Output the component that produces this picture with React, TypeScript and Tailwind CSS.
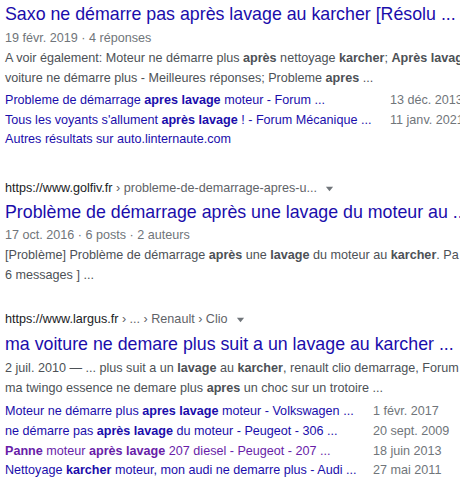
import React from "react";

type Part = string | { b: string };

const Rich = ({ parts }: { parts: Part[] }) => (
  <>
    {parts.map((p, i) =>
      typeof p === "string" ? (
        <span key={i}>{p}</span>
      ) : (
        <b key={i} className="font-bold">
          {p.b}
        </b>
      )
    )}
  </>
);

interface SubLink {
  parts: Part[];
  date: string;
  visited?: boolean;
}

const SubLinks = ({ links, col }: { links: SubLink[]; col: string }) => (
  <div className="flex flex-col">
    {links.map((l, i) => (
      <div key={i} className="flex leading-[19.7px] text-[12.6px]">
        <div className={`${col} shrink-0 overflow-hidden ${l.visited ? "text-[#681da8]" : "text-[#1a0dab]"}`}>
          <Rich parts={l.parts} />
        </div>
        <div className="text-[#70757a] shrink-0">{l.date}</div>
      </div>
    ))}
  </div>
);

const Arrow = () => (
  <svg width="9" height="9" viewBox="0 0 10 10" className="inline-block ml-[8px] mb-[1px]">
    <path d="M1 3 L9 3 L5 8 Z" fill="#70757a" />
  </svg>
);

export default function App() {
  return (
    <div
      className="w-[460px] h-[480px] overflow-hidden bg-white whitespace-nowrap pl-[5px]"
      style={{ fontFamily: '"Liberation Sans", Arial, sans-serif' }}
    >
      {/* result 1 */}
      <div className="pt-[1px]">
        <div className="text-[17.8px] leading-[26px] text-[#1a0dab]">
          Saxo ne démarre pas après lavage au karcher [Résolu ...
        </div>
        <div className="text-[12.6px] leading-[20px] text-[#70757a] mt-[1px]">19 févr. 2019 · 4 réponses</div>
        <div className="text-[12.6px] leading-[20px] text-[#4d5156]">
          <div>
            <Rich
              parts={[
                "A voir également: Moteur ne démarre plus ",
                { b: "après" },
                " nettoyage ",
                { b: "karcher" },
                "; ",
                { b: "Après lavage" },
                " ma",
              ]}
            />
          </div>
          <div>
            <Rich parts={["voiture ne démarre plus - Meilleures réponses; Probleme ", { b: "apres" }, " ..."]} />
          </div>
        </div>
        <div className="mt-[3px]">
          <SubLinks
            col="w-[385px]"
            links={[
              { parts: ["Probleme de démarrage ", { b: "apres lavage" }, " moteur - Forum ..."], date: "13 déc. 2013" },
              { parts: ["Tous les voyants s'allument ", { b: "après lavage" }, " ! - Forum Mécanique ..."], date: "11 janv. 2021" },
            ]}
          />
          <div className="text-[12.6px] leading-[19.7px] text-[#1a0dab]">Autres résultats sur auto.linternaute.com</div>
        </div>
      </div>

      {/* result 2 */}
      <div className="mt-[28px]">
        <div className="text-[12.6px] leading-[20px] text-[#202124]">
          https://www.golfiv.fr<span className="text-[#5f6368]"> › probleme-de-demarrage-apres-u...</span>
          <Arrow />
        </div>
        <div className="text-[17.8px] leading-[26px] text-[#1a0dab] mt-[1px]">
          Problème de démarrage après une lavage du moteur au ...
        </div>
        <div className="text-[12.6px] leading-[20px] text-[#70757a]">17 oct. 2016 · 6 posts · 2 auteurs</div>
        <div className="text-[12.6px] leading-[20px] text-[#4d5156]">
          <div>
            <Rich
              parts={[
                "[Problème] Problème de démarrage ",
                { b: "après" },
                " une ",
                { b: "lavage" },
                " du moteur au ",
                { b: "karcher" },
                ". Pa",
              ]}
            />
          </div>
          <div>6 messages ] ...</div>
        </div>
      </div>

      {/* result 3 */}
      <div className="mt-[24px]">
        <div className="text-[12.6px] leading-[20px] text-[#202124]">
          https://www.largus.fr<span className="text-[#5f6368]"> › ... › Renault › Clio</span>
          <Arrow />
        </div>
        <div className="text-[17.8px] leading-[26px] text-[#1a0dab] mt-[2px]">
          ma voiture ne demare plus suit a un lavage au karcher ...
        </div>
        <div className="text-[12.6px] leading-[19.5px] text-[#4d5156] mt-[2px]">
          <div>
            <Rich
              parts={[
                "2 juil. 2010 — ... plus suit a un ",
                { b: "lavage" },
                " au ",
                { b: "karcher" },
                ", renault clio demarrage, Forum",
              ]}
            />
          </div>
          <div>
            <Rich parts={["ma twingo essence ne demare plus ", { b: "apres" }, " un choc sur un trotoire ..."]} />
          </div>
        </div>
        <div className="mt-[4px]">
          <SubLinks
            col="w-[368px]"
            links={[
              { parts: ["Moteur ne démarre plus ", { b: "apres lavage" }, " moteur - Volkswagen ..."], date: "1 févr. 2017" },
              { parts: ["ne démarre pas ", { b: "après lavage" }, " du moteur - Peugeot - 306 ..."], date: "20 sept. 2009" },
              { parts: [{ b: "Panne" }, " moteur ", { b: "après lavage" }, " 207 diesel - Peugeot - 207 ..."], date: "18 juin 2013", visited: true },
              { parts: ["Nettoyage ", { b: "karcher" }, " moteur, mon audi ne demarre plus - Audi ..."], date: "27 mai 2011" },
            ]}
          />
        </div>
      </div>
    </div>
  );
}
